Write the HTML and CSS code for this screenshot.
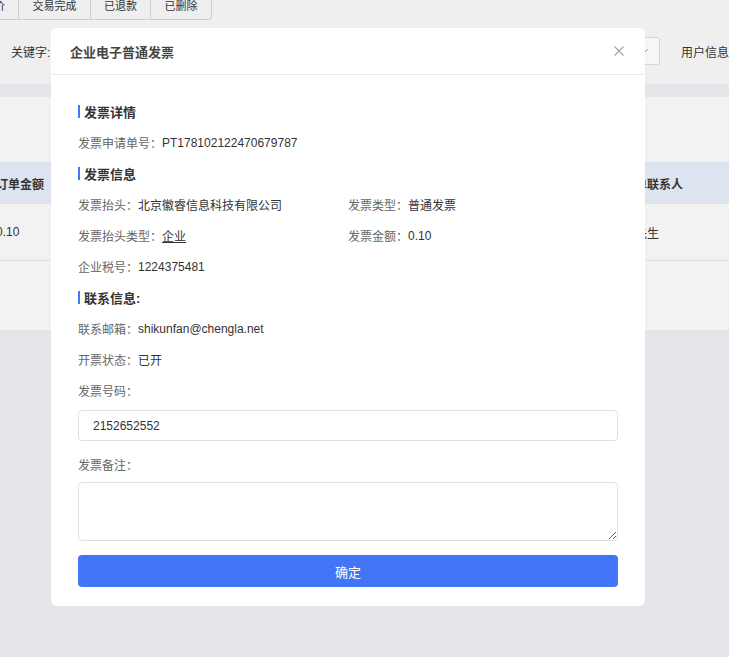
FILE: index.html
```html
<!DOCTYPE html>
<html lang="zh-CN">
<head>
    <meta charset="UTF-8">
    <meta name="viewport" content="width=device-width, initial-scale=1.0">
    <title>企业电子普通发票</title>
    <link rel="stylesheet" href="styles.css">
</head>
<body>
    <div class="page">
        <div class="tabs">
            <div class="tab tab-first">待评价</div>
            <div class="tab tab-wide">交易完成</div>
            <div class="tab">已退款</div>
            <div class="tab">已删除</div>
        </div>
        <div class="search">
            <span class="search-label">关键字:</span>
            <div class="kw-input"></div>
            <div class="select">
                <svg class="chevron" width="10" height="6" viewBox="0 0 10 6"><polyline points="1,1 5,5 9,1" fill="none" stroke="#999" stroke-width="1"/></svg>
            </div>
            <span class="search-label user-info">用户信息</span>
        </div>
        <div class="stripe"></div>
        <div class="table-area">
            <div class="thead">
                <div class="cell cell-amount">订单金额</div>
                <div class="cell cell-contact">订单联系人</div>
            </div>
            <div class="trow">
                <div class="cell cell-amount">0.10</div>
                <div class="cell cell-contact">张先生</div>
            </div>
        </div>
    </div>

    <div class="modal">
        <div class="modal-header">
            <span class="modal-title">企业电子普通发票</span>
            <svg class="close" width="10" height="10" viewBox="0 0 10 10"><path d="M0.5 0.5 L9.5 9.5 M9.5 0.5 L0.5 9.5" stroke="#a0a4ab" stroke-width="1.1"/></svg>
        </div>
        <div class="modal-body">
            <div class="line section">发票详情</div>
            <div class="line"><span class="label">发票申请单号：</span>PT178102122470679787</div>

            <div class="line section">发票信息</div>
            <div class="grid">
                <div class="line"><span class="label">发票抬头：</span>北京徽睿信息科技有限公司</div>
                <div class="line"><span class="label">发票类型：</span>普通发票</div>
                <div class="line"><span class="label">发票抬头类型：</span><span class="link">企业</span></div>
                <div class="line"><span class="label">发票金额：</span>0.10</div>
                <div class="line"><span class="label">企业税号：</span>1224375481</div>
            </div>

            <div class="line section">联系信息:</div>
            <div class="line"><span class="label">联系邮箱：</span>shikunfan@chengla.net</div>
            <div class="line"><span class="label">开票状态：</span>已开</div>
            <div class="line"><span class="label">发票号码：</span></div>
            <input class="field" type="text" value="2152652552">
            <div class="line line-note"><span class="label">发票备注：</span></div>
            <textarea class="field note"></textarea>
            <button class="confirm">确定</button>
        </div>
    </div>
</body>
</html>
```

FILE: styles.css
```css
body {
    margin: 0;
    background-color: #e4e5e9;
    font-family: "Liberation Sans", "Noto Sans CJK SC", sans-serif;
    font-size: 12px;
    color: #333;
    overflow: hidden;
}
.page {
    background-color: #efefef;
}
.tabs {
    display: flex;
    width: max-content;
    margin-top: -8px;
    margin-left: -41px;
    border: 1px solid #cfcfcf;
    border-top: none;
    border-left: none;
    border-radius: 0 0 4px 0;
}
.tab {
    box-sizing: border-box;
    width: 60px;
    height: 27px;
    line-height: 29px;
    font-size: 11px;
    text-align: center;
    border-right: 1px solid #cfcfcf;
    color: #333;
    white-space: nowrap;
    overflow: hidden;
}
.tab-wide {
    width: 72px;
}
.tab:last-child {
    border-right: none;
}
.search {
    display: flex;
    align-items: center;
    padding: 17px 0 19px 11px;
    white-space: nowrap;
}
.kw-input {
    width: 380px;
    height: 28px;
    margin-left: 8px;
}
.select {
    position: relative;
    width: 200px;
    height: 26px;
    margin-left: 22px;
    border: 1px solid #d4d4d4;
    border-radius: 3px;
    background: #f6f6f6;
}
.chevron {
    position: absolute;
    right: 10px;
    top: 10px;
}
.user-info {
    margin-left: 21px;
}
.stripe {
    height: 13px;
    background-color: #e4e5e9;
}
.table-area {
    height: 168px;
    padding-top: 65px;
    background-color: #f2f2f2;
}
.thead, .trow {
    display: flex;
    align-items: center;
}
.thead {
    height: 42px;
    background-color: #dde3ef;
    font-weight: bold;
    color: #333;
}
.trow {
    height: 56px;
    border-bottom: 1px solid #d9dce3;
}
.cell-amount {
    margin-left: -4px;
    width: 627px;
}

.modal {
    position: absolute;
    left: 51px;
    top: 28px;
    width: 594px;
    background: #fff;
    border-radius: 6px;
}
.modal-header {
    display: flex;
    align-items: center;
    justify-content: space-between;
    height: 46px;
    padding: 0 21px 0 19px;
    border-bottom: 1px solid #ebebeb;
}
.modal-title {
    font-size: 13px;
    font-weight: bold;
    color: #444;
}
.modal-body {
    padding: 21px 27px 19px;
}
.line {
    display: flex;
    align-items: center;
    height: 31px;
    color: #333;
    white-space: nowrap;
}
.label {
    color: #666;
}
.section {
    font-size: 13px;
    font-weight: bold;
    color: #333;
}
.section::before {
    content: "";
    width: 2px;
    height: 13px;
    margin-right: 4px;
    background: #4275f8;
}
.grid {
    display: grid;
    grid-template-columns: 1fr 1fr;
}
.link {
    text-decoration: underline;
}
.field {
    display: block;
    box-sizing: border-box;
    width: 100%;
    margin: 4px 0 0;
    border: 1px solid #dcdfe6;
    border-radius: 4px;
    font-family: inherit;
    font-size: 12px;
    color: #333;
    outline: none;
}
input.field {
    height: 31px;
    padding: 0 14px;
}
.line-note {
    margin-top: 8px;
}
.note {
    height: 59px;
    margin-top: 2px;
    resize: vertical;
}
.confirm {
    display: block;
    width: 100%;
    height: 32px;
    margin-top: 14px;
    border: none;
    border-radius: 4px;
    background: #4275f8;
    color: #fff;
    font-family: inherit;
    font-size: 13px;
    cursor: pointer;
}
```
